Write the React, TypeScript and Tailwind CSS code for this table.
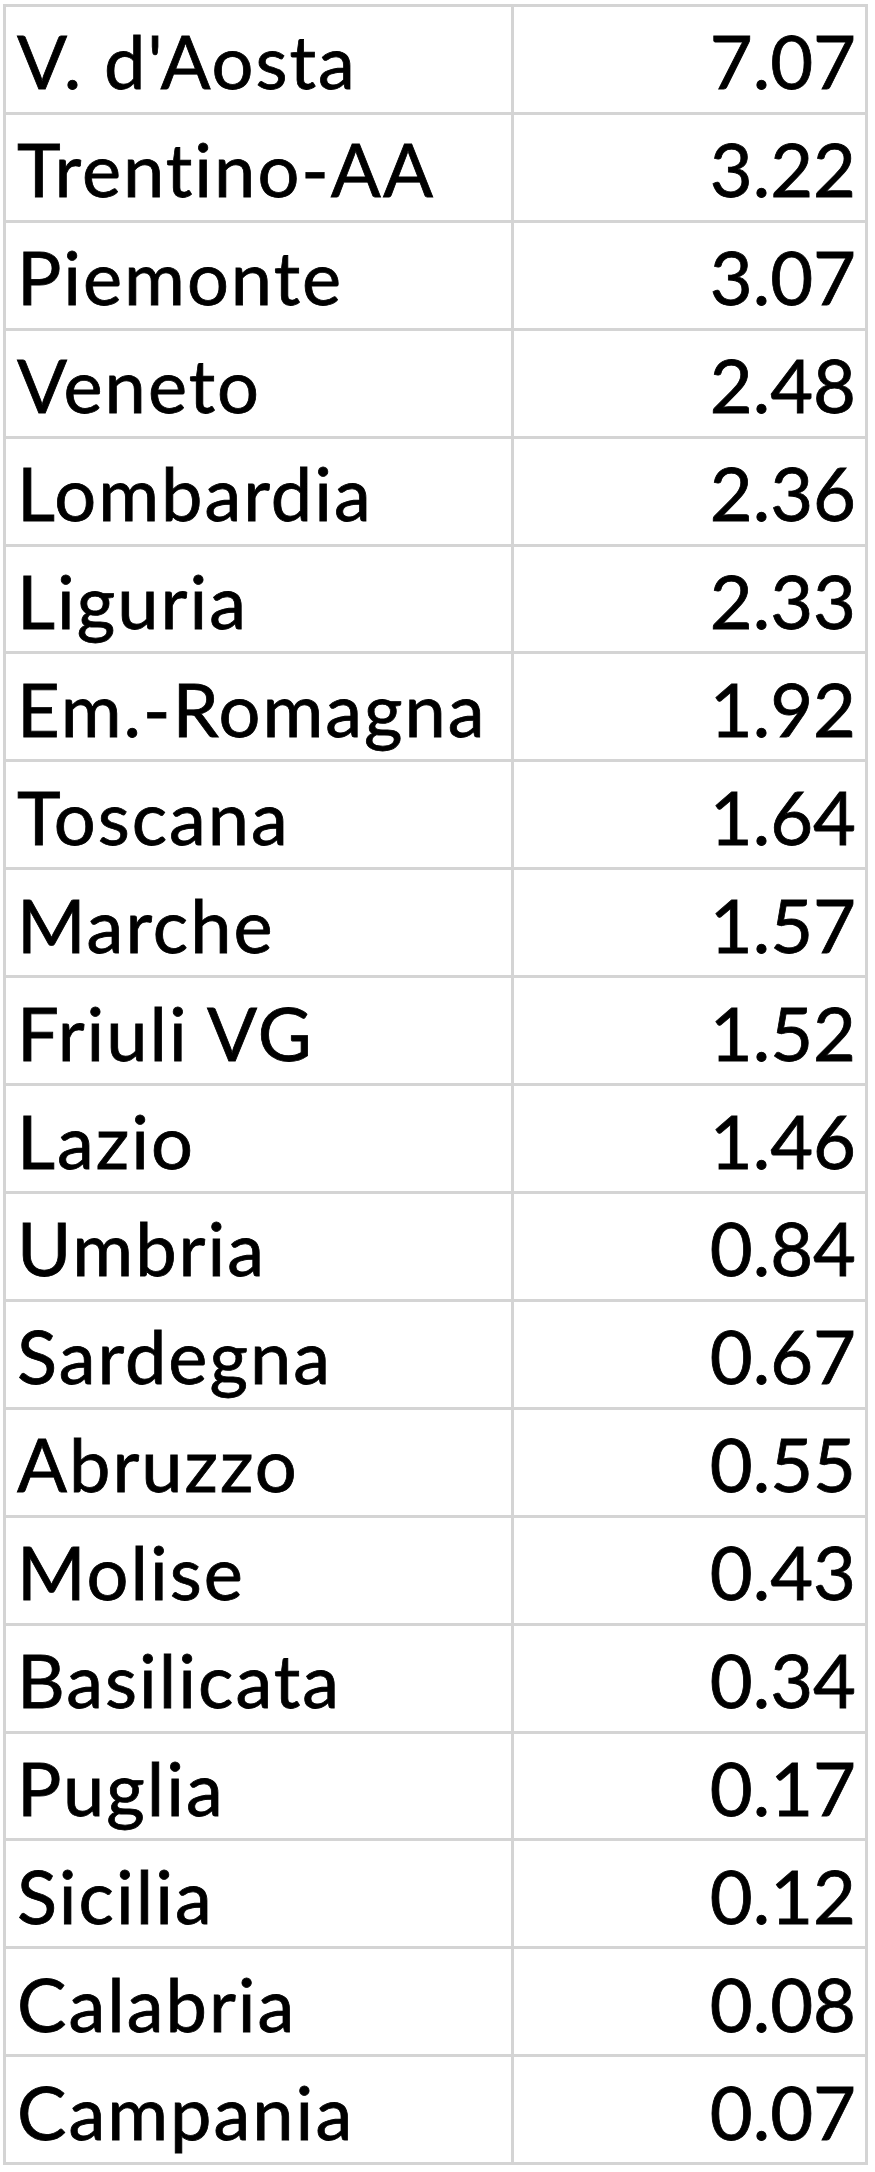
const ROWS: [string, string][] = [
  ["V. d'Aosta", '7.07'],
  ['Trentino-AA', '3.22'],
  ['Piemonte', '3.07'],
  ['Veneto', '2.48'],
  ['Lombardia', '2.36'],
  ['Liguria', '2.33'],
  ['Em.-Romagna', '1.92'],
  ['Toscana', '1.64'],
  ['Marche', '1.57'],
  ['Friuli VG', '1.52'],
  ['Lazio', '1.46'],
  ['Umbria', '0.84'],
  ['Sardegna', '0.67'],
  ['Abruzzo', '0.55'],
  ['Molise', '0.43'],
  ['Basilicata', '0.34'],
  ['Puglia', '0.17'],
  ['Sicilia', '0.12'],
  ['Calabria', '0.08'],
  ['Campania', '0.07'],
]

export default function App() {
  return (
    <div className="w-[875px] h-[2172px] bg-white pt-[4px] pl-[3px]">
      <div className="w-[865px] h-[2161px] flex flex-col border-[3px] border-b-0 border-[#d4d4d4] text-black text-[74px] leading-none font-['Lato',sans-serif] [-webkit-text-stroke:0.8px_black]">
        {ROWS.map(([region, value]) => (
          <div key={region} className="flex-1 flex border-b-[3px] border-[#d4d4d4]">
            <div className="w-[508px] shrink-0 border-r-[3px] border-[#d4d4d4] flex items-center pl-[11px] pt-[4px] tracking-[2px]">
              {region}
            </div>
            <div className="flex-1 flex items-center justify-end pr-[9px] pt-[4px]">
              {value}
            </div>
          </div>
        ))}
      </div>
    </div>
  )
}
